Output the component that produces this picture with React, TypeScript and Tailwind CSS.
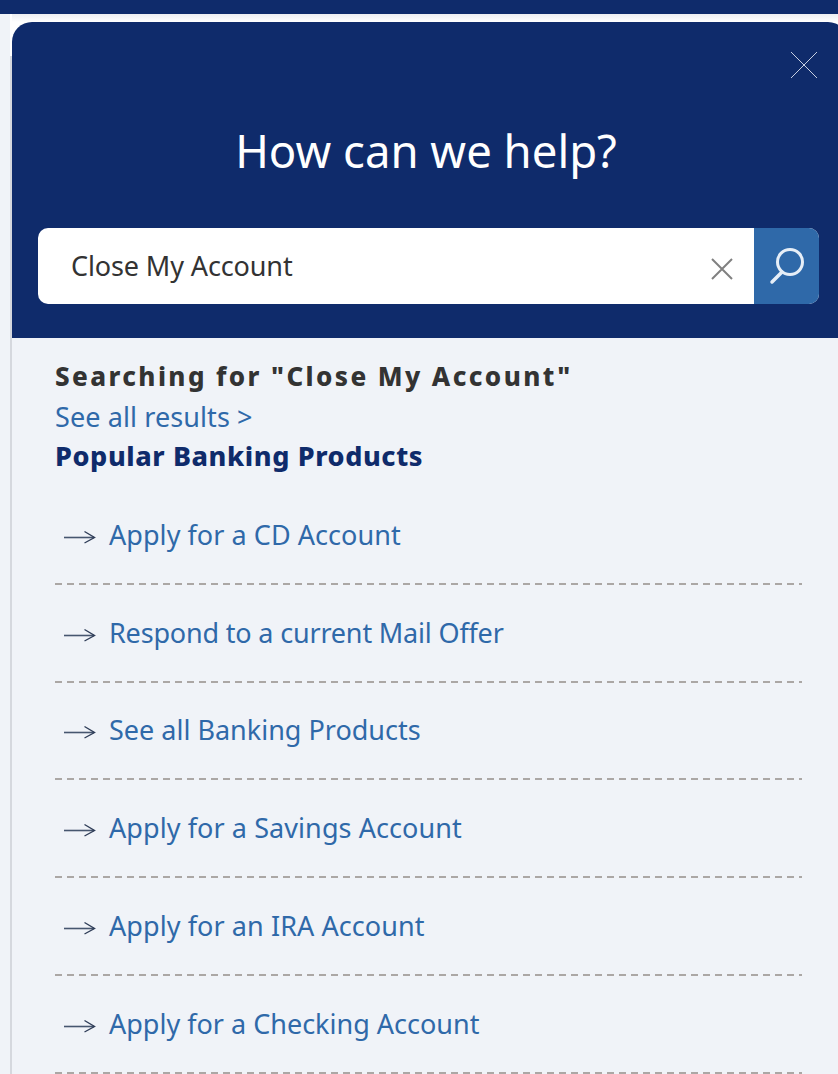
import React from "react";

const items = [
  { t: "Apply for a CD Account", c: "tracking-[0.05px]" },
  { t: "Respond to a current Mail Offer", c: "tracking-[-0.18px]" },
  { t: "See all Banking Products", c: "tracking-[0px]" },
  { t: "Apply for a Savings Account", c: "tracking-[0.08px]" },
  { t: "Apply for an IRA Account", c: "tracking-[0.08px]" },
  { t: "Apply for a Checking Account", c: "tracking-[0px]" },
];

function Arrow() {
  return (
    <svg width="33" height="16" viewBox="0 0 33 16" fill="none" className="mt-[4px] shrink-0">
      <path d="M1 8.5H31" stroke="#46566f" strokeWidth="1.6" />
      <path d="M21.5 2.5L31.5 8.5L21.5 14" stroke="#2f3d58" strokeWidth="1.4" />
    </svg>
  );
}

export default function App() {
  return (
    <div className="h-[1074px] w-[838px] overflow-hidden bg-[#f0f3f8] font-['Noto_Sans',sans-serif]">
      <div className="h-[14px] bg-[#0f2b6b]" />
      <div className="flex">
        <div className="ml-[10px] flex w-[2px] shrink-0 flex-col">
          <div className="h-[42px] bg-white" />
          <div className="h-[1018px] bg-[#d5d8de]" />
        </div>
        <div className="min-w-0 flex-1">
          <div className="mr-[-10px] bg-white">
            <div className="h-[8px] bg-gradient-to-b from-[#eceef2] to-white" />
            <div className="relative h-[316px] rounded-tl-[20px] rounded-tr-[20px] bg-[#0f2b6b] px-[26px]">
              <svg width="28" height="28" viewBox="0 0 28 28" fill="none" className="absolute left-[778px] top-[29px]">
                <path d="M1 1L27 27M27 1L1 27" stroke="#c6cfe2" strokeWidth="1" />
              </svg>
              <h1 className="mr-[10px] pt-[98px] pl-[2px] text-center text-[45.5px] leading-[60px] font-normal text-white">How can we help?</h1>
              <div className="mt-[48px] flex h-[76px] w-[781px] overflow-hidden rounded-[10px] bg-white">
                <div className="flex flex-1 items-center pl-[33px] text-[27px] tracking-[-0.12px] text-[#333333]">Close My Account</div>
                <div className="flex w-[66px] items-center justify-center pt-[6px] pl-[2px]">
                  <svg width="24" height="24" viewBox="0 0 24 24" fill="none">
                    <path d="M2 2L22 22M22 2L2 22" stroke="#808080" strokeWidth="2" />
                  </svg>
                </div>
                <div className="flex w-[65px] items-center justify-center bg-[#2f69a9]">
                  <svg width="36" height="38" viewBox="0 0 36 38" fill="none">
                    <circle cx="21" cy="15" r="12.5" stroke="#e6eef7" strokeWidth="3" />
                    <path d="M13 25L3 35" stroke="#e6eef7" strokeWidth="3.5" strokeLinecap="round" />
                  </svg>
                </div>
              </div>
            </div>
          </div>
          <div className="pl-[43px] pr-[36px]">
            <div className="pt-[20px] text-[26px] leading-[36px] font-extrabold tracking-[2.4px] text-[#333333]">Searching for "Close My Account"</div>
            <div className="mt-[5px] text-[27px] leading-[36px] tracking-[0.1px] text-[#2f69a9]">See all results &gt;</div>
            <div className="mt-[3px] text-[27px] leading-[36px] font-extrabold tracking-[0.6px] text-[#0f2b6b]">Popular Banking Products</div>
            <ul className="mt-[13px]">
              {items.map(({ t, c }) => (
                <li key={t} className="flex h-[97.8px] flex-col justify-end">
                  <div className="flex flex-1 items-center gap-[13px] pl-[8px]">
                    <Arrow />
                    <span className={`text-[27px] leading-[40px] text-[#2f69a9] ${c}`}>{t}</span>
                  </div>
                  <div className="h-[2px] bg-[repeating-linear-gradient(90deg,#aba7a5_0_7px,transparent_7px_12px)]" />
                </li>
              ))}
            </ul>
          </div>
        </div>
      </div>
    </div>
  );
}
